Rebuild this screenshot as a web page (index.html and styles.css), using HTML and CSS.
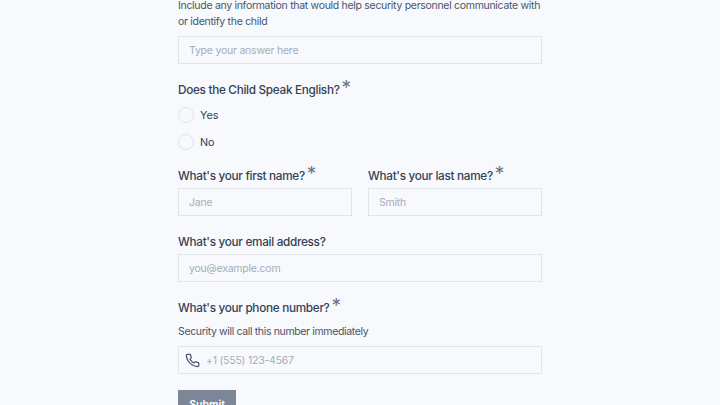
FILE: index.html
```html
<!DOCTYPE html>
<html lang="en">
<head>
<meta charset="utf-8">
<title>Form</title>
<link rel="stylesheet" href="styles.css">
</head>
<body>
<form class="form">
  <div class="field field-first">
    <p class="hint hint-top">Include any information that would help security personnel communicate with or identify the child</p>
    <input class="input" type="text" placeholder="Type your answer here">
  </div>
  <div class="field field-radio">
    <div class="label">Does the Child Speak English?<span class="req">*</span></div>
    <div class="radios">
      <label class="radio"><span class="dot"></span>Yes</label>
      <label class="radio"><span class="dot"></span>No</label>
    </div>
  </div>
  <div class="row">
    <div class="col">
      <div class="label">What's your first name?<span class="req">*</span></div>
      <input class="input" type="text" placeholder="Jane">
    </div>
    <div class="col">
      <div class="label">What's your last name?<span class="req">*</span></div>
      <input class="input" type="text" placeholder="Smith">
    </div>
  </div>
  <div class="field">
    <div class="label">What's your email address?</div>
    <input class="input" type="text" placeholder="you@example.com">
  </div>
  <div class="field">
    <div class="label">What's your phone number?<span class="req">*</span></div>
    <p class="hint hint-phone">Security will call this number immediately</p>
    <div class="phone">
      <svg class="icon" viewBox="0 0 24 24" fill="none" stroke="#475569" stroke-width="2" stroke-linecap="round" stroke-linejoin="round"><path d="M22 16.92v3a2 2 0 0 1-2.18 2 19.79 19.79 0 0 1-8.63-3.07 19.5 19.5 0 0 1-6-6 19.79 19.79 0 0 1-3.07-8.67A2 2 0 0 1 4.11 2h3a2 2 0 0 1 2 1.72c.13.96.36 1.9.7 2.81a2 2 0 0 1-.45 2.11L8.09 9.91a16 16 0 0 0 6 6l1.27-1.27a2 2 0 0 1 2.11-.45c.91.34 1.85.57 2.81.7A2 2 0 0 1 22 16.92z"/></svg>
      <input class="phone-input" type="text" placeholder="+1 (555) 123-4567">
    </div>
  </div>
  <button class="submit" type="button">Submit</button>
</form>
</body>
</html>
```
FILE: styles.css
```css
* { box-sizing: border-box; }
html, body { margin: 0; height: 405px; overflow: hidden; background: #f7f9fc; }
body { font-family: Inter, "Liberation Sans", sans-serif; color: #334155; }
.form { width: 364px; margin: 0 0 0 178px; display: flex; flex-direction: column; }
.field { margin-bottom: 16px; }
.field-first { margin-top: -2px; margin-bottom: 16px; }
.field-radio { margin-bottom: 14px; }
.hint { margin: 0; font-size: 10.5px; letter-spacing: -0.3px; line-height: 16px; color: #475569; }
.hint-top { margin-bottom: 6px; }
.hint-phone { margin-top: 6px; letter-spacing: -0.35px; }
.label { font-size: 11.75px; font-weight: 500; letter-spacing: -0.3px; line-height: 20px; color: #334155; display: flex; }
.req { font-size: 19px; font-weight: 400; letter-spacing: 0; line-height: 20px; color: #6b7583; margin-left: 2px; position: relative; top: -2px; }
.input { display: block; width: 100%; height: 28px; border: 1px solid #dfe3ea; background: #f7f9fc; padding: 0 10px; margin-top: 2px; font: 10.5px Inter, sans-serif; letter-spacing: -0.22px; color: #334155; outline: none; border-radius: 0; }
.input::placeholder, .phone-input::placeholder { color: #a5adb8; opacity: 1; }
.radios { display: flex; flex-direction: column; gap: 7px; margin-top: 5px; }
.radio { display: flex; align-items: center; gap: 6px; height: 20px; font-size: 10.75px; color: #334155; }
.dot { width: 16px; height: 16px; border: 1px solid #dfe3ea; border-radius: 50%; background: #f7f9fc; }
.row { display: flex; gap: 16px; margin-bottom: 16px; }
.col { flex: 1; min-width: 0; }
.phone { display: flex; align-items: center; height: 28px; margin-top: 6px; border: 1px solid #dfe3ea; padding-left: 6px; gap: 6px; }
.icon { width: 15px; height: 15px; flex: none; }
.phone-input { flex: 1; min-width: 0; border: 0; background: transparent; padding: 0; font: 10.5px Inter, sans-serif; letter-spacing: -0.22px; outline: none; }
.submit { width: 58px; height: 28px; border: 0; background: #7b8797; color: #fff; font: 600 10.5px Inter, sans-serif; padding: 0; }
```
